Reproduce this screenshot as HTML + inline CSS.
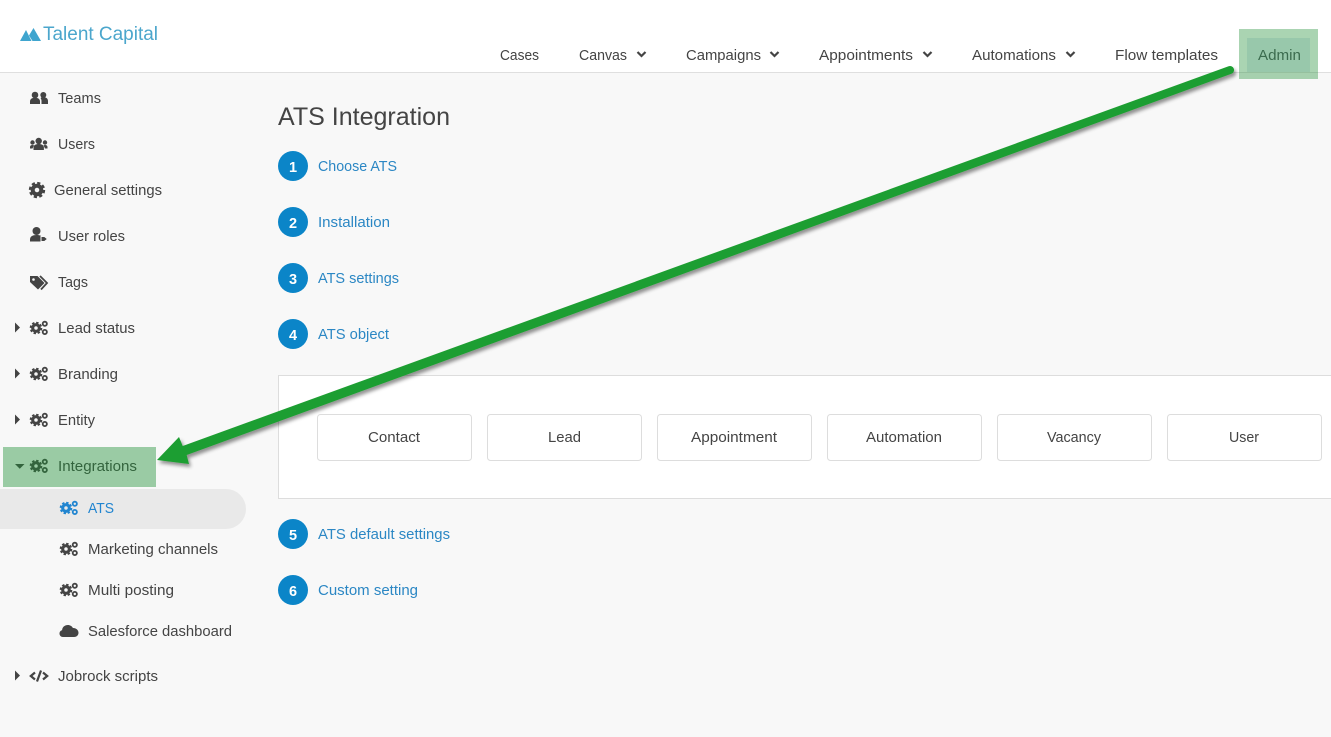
<!DOCTYPE html>
<html lang="en"><head><meta charset="utf-8"><title>ATS Integration</title>
<style>
html,body{margin:0;padding:0;background:#f8f8f8;width:1331px;height:737px;overflow:hidden}
svg{display:block}
text{font-family:"Liberation Sans",sans-serif;font-size:15px;fill:#444}
.l{fill:#2b87c4}
.d{fill:#fff;font-weight:bold;font-size:14.500px;text-anchor:middle}
</style></head><body>
<svg width="1331" height="737" viewBox="0 0 1331 737" xmlns="http://www.w3.org/2000/svg">
<defs>
<g id="cog"><circle cx="0" cy="0" r="3.300" fill="none" stroke="currentColor" stroke-width="3.100"/><circle cx="0" cy="0" r="5.300" fill="none" stroke="currentColor" stroke-width="2" stroke-dasharray="2.400 1.760"/></g>
<g id="gears"><use href="#cog" x="6" y="7"/><circle cx="14.800" cy="2.800" r="2.100" fill="none" stroke="currentColor" stroke-width="1.800"/><circle cx="14.800" cy="11" r="2.100" fill="none" stroke="currentColor" stroke-width="1.800"/></g>
<filter id="sh" x="-5%" y="-10%" width="110%" height="120%"><feDropShadow dx="2" dy="3" stdDeviation="1.800" flood-color="#000" flood-opacity=".42"/></filter>
</defs>
<rect width="1331" height="737" fill="#f8f8f8"/>
<rect width="1331" height="72" fill="#fff"/>
<rect y="72" width="1331" height="1" fill="#dfdfdf"/>
<!-- logo -->
<path d="M20 41L26 30L31.500 41ZM29 35.500L33.500 28L41 41L32.500 41Z" fill="#3fa5cf"/>
<text x="43" y="40" textLength="115" lengthAdjust="spacingAndGlyphs" style="font-size:19px;fill:#4ba6cc">Talent Capital</text>
<!-- nav -->
<text x="500" y="60" textLength="39" lengthAdjust="spacingAndGlyphs">Cases</text>
<text x="579" y="60" textLength="48" lengthAdjust="spacingAndGlyphs">Canvas</text>
<text x="686" y="60" textLength="75" lengthAdjust="spacingAndGlyphs">Campaigns</text>
<text x="819" y="60" textLength="94" lengthAdjust="spacingAndGlyphs">Appointments</text>
<text x="972" y="60" textLength="84" lengthAdjust="spacingAndGlyphs">Automations</text>
<text x="1115" y="60" textLength="103" lengthAdjust="spacingAndGlyphs">Flow templates</text>
<g fill="none" stroke="#444" stroke-width="2.200">
<path d="M637.500 52l4 4 4-4M770.500 52l4 4 4-4M923.500 52l4 4 4-4M1066.500 52l4 4 4-4"/>
</g>
<!-- pill -->
<path d="M0 489H226a20 20 0 0 1 0 40H0Z" fill="#e9e9e9"/>
<!-- sidebar text -->
<text x="58" y="103" textLength="43" lengthAdjust="spacingAndGlyphs">Teams</text>
<text x="58" y="149" textLength="37" lengthAdjust="spacingAndGlyphs">Users</text>
<text x="54" y="195" textLength="108" lengthAdjust="spacingAndGlyphs">General settings</text>
<text x="58" y="241" textLength="67" lengthAdjust="spacingAndGlyphs">User roles</text>
<text x="58" y="287" textLength="30" lengthAdjust="spacingAndGlyphs">Tags</text>
<text x="58" y="333" textLength="77" lengthAdjust="spacingAndGlyphs">Lead status</text>
<text x="58" y="379" textLength="60" lengthAdjust="spacingAndGlyphs">Branding</text>
<text x="58" y="425" textLength="37" lengthAdjust="spacingAndGlyphs">Entity</text>
<text x="58" y="471" textLength="79" lengthAdjust="spacingAndGlyphs">Integrations</text>
<text x="88" y="513" textLength="26" lengthAdjust="spacingAndGlyphs" style="fill:#2185d0">ATS</text>
<text x="88" y="554" textLength="130" lengthAdjust="spacingAndGlyphs">Marketing channels</text>
<text x="88" y="595" textLength="86" lengthAdjust="spacingAndGlyphs">Multi posting</text>
<text x="88" y="636" textLength="144" lengthAdjust="spacingAndGlyphs">Salesforce dashboard</text>
<text x="58" y="681" textLength="100" lengthAdjust="spacingAndGlyphs">Jobrock scripts</text>
<!-- sidebar icons -->
<g fill="#444" color="#444">
<circle cx="35" cy="95" r="3.300"/><path d="M30 104v-2.500c0-2.600 2-3.800 5-3.800s5 1.200 5 3.800v2.500Z"/>
<circle cx="43.300" cy="95" r="3"/><path d="M41.500 104v-3c0-1.400-.5-2.400-1-3 .9-.5 2-.7 3-.7 2.500 0 4.500 1.200 4.500 3.700v3Z"/>
<circle cx="38.700" cy="141" r="3.200"/><path d="M33.500 150v-2.500c0-2.200 2.200-3.500 5.200-3.500s5.200 1.300 5.200 3.500v2.500Z"/>
<circle cx="32.500" cy="142.500" r="2.200"/><circle cx="45" cy="142.500" r="2.200"/><path d="M30 148.500v-1.500c0-1.300 1-2 2.500-2l1.500.3-1.500 3.200ZM47.500 148.500v-1.500c0-1.300-1-2-2.500-2l-1.500.3 1.500 3.200Z"/>
<use href="#cog" x="37" y="190" transform="translate(37 190) scale(1.300) translate(-37 -190)"/>
<circle cx="36.500" cy="231" r="4"/><path d="M30 241.500v-2c0-3 2.500-4.500 6.500-4.500 2 0 3.500.3 4.700 1v5.500Z"/><path d="M41 236.500h3.500l3 2.500-3 2.500H41Z" stroke="#f8f8f8" stroke-width="1"/>
<path d="M30 276h7.500l7 7-6.500 6.500-8-7.500Z"/><circle cx="33.500" cy="279.500" r="1.300" fill="#f8f8f8"/><path d="M40 276l7 7-6 6.500" fill="none" stroke="#444" stroke-width="1.800"/>
<use href="#gears" x="30" y="321"/><use href="#gears" x="30" y="367"/><use href="#gears" x="30" y="413"/><use href="#gears" x="30" y="459"/>
<use href="#gears" x="60" y="542"/><use href="#gears" x="60" y="583"/>
<use href="#gears" x="60" y="501" style="color:#2185d0"/>
<path d="M63 637c-2 0-3.500-1.500-3.500-3.500 0-1.700 1.100-3 2.600-3.400.2-3 2.700-5.100 5.700-5.100 2.300 0 4.200 1.200 5.100 3 3-.2 5.600 2 5.600 4.800 0 2.500-2 4.200-4.500 4.200Z"/>
<path d="M15 322.500l5 5-5 5ZM15 368.500l5 5-5 5ZM15 414.500l5 5-5 5ZM15 670.500l5 5-5 5ZM15 464h9.500l-4.750 4.800Z"/>
</g>
<path d="M35 672.500l-4.200 3.500 4.200 3.500M43 672.500l4.200 3.500-4.200 3.500M41 670.500l-4 11" fill="none" stroke="#444" stroke-width="2.200"/>
<!-- main -->
<text x="278" y="125" textLength="172" lengthAdjust="spacingAndGlyphs" style="font-size:25px">ATS Integration</text>
<g fill="#0b85c8">
<circle cx="293" cy="166" r="15"/><circle cx="293" cy="222" r="15"/><circle cx="293" cy="278" r="15"/><circle cx="293" cy="334" r="15"/><circle cx="293" cy="534" r="15"/><circle cx="293" cy="590" r="15"/>
</g>
<text class="d" x="293" y="172">1</text><text class="d" x="293" y="228">2</text><text class="d" x="293" y="284">3</text><text class="d" x="293" y="340">4</text><text class="d" x="293" y="540">5</text><text class="d" x="293" y="596">6</text>
<text class="l" x="318" y="171" textLength="79" lengthAdjust="spacingAndGlyphs">Choose ATS</text>
<text class="l" x="318" y="227" textLength="72" lengthAdjust="spacingAndGlyphs">Installation</text>
<text class="l" x="318" y="283" textLength="81" lengthAdjust="spacingAndGlyphs">ATS settings</text>
<text class="l" x="318" y="339" textLength="71" lengthAdjust="spacingAndGlyphs">ATS object</text>
<text class="l" x="318" y="539" textLength="132" lengthAdjust="spacingAndGlyphs">ATS default settings</text>
<text class="l" x="318" y="595" textLength="100" lengthAdjust="spacingAndGlyphs">Custom setting</text>
<!-- card -->
<rect x="278.500" y="375.500" width="1060" height="123" fill="#fff" stroke="#ddd"/>
<g fill="#fff" stroke="#ddd">
<rect x="317.500" y="414.500" width="154" height="46" rx="3"/>
<rect x="487.500" y="414.500" width="154" height="46" rx="3"/>
<rect x="657.500" y="414.500" width="154" height="46" rx="3"/>
<rect x="827.500" y="414.500" width="154" height="46" rx="3"/>
<rect x="997.500" y="414.500" width="154" height="46" rx="3"/>
<rect x="1167.500" y="414.500" width="154" height="46" rx="3"/>
</g>
<text x="368" y="442" textLength="52" lengthAdjust="spacingAndGlyphs">Contact</text>
<text x="548" y="442" textLength="33" lengthAdjust="spacingAndGlyphs">Lead</text>
<text x="691" y="442" textLength="86" lengthAdjust="spacingAndGlyphs">Appointment</text>
<text x="866" y="442" textLength="76" lengthAdjust="spacingAndGlyphs">Automation</text>
<text x="1047" y="442" textLength="54" lengthAdjust="spacingAndGlyphs">Vacancy</text>
<text x="1229" y="442" textLength="30" lengthAdjust="spacingAndGlyphs">User</text>
<!-- highlights -->
<text x="1258" y="60" textLength="43" lengthAdjust="spacingAndGlyphs">Admin</text>
<rect x="1239" y="29" width="79" height="50" fill="#1f8f35" fill-opacity=".38"/>
<rect x="1247" y="38" width="63" height="34" fill="#4f9a90" fill-opacity=".2"/>
<rect x="3" y="447" width="153" height="40" fill="#1f8f35" fill-opacity=".43"/>
<!-- arrow -->
<g filter="url(#sh)">
<path d="M1228.600 66.200L182.700 446L179 437L157 460L189 464L186.700 455L1231.400 73.800A4 4 0 0 0 1228.600 66.200Z" fill="#1e9e30"/>
</g>
</svg>
</body></html>
